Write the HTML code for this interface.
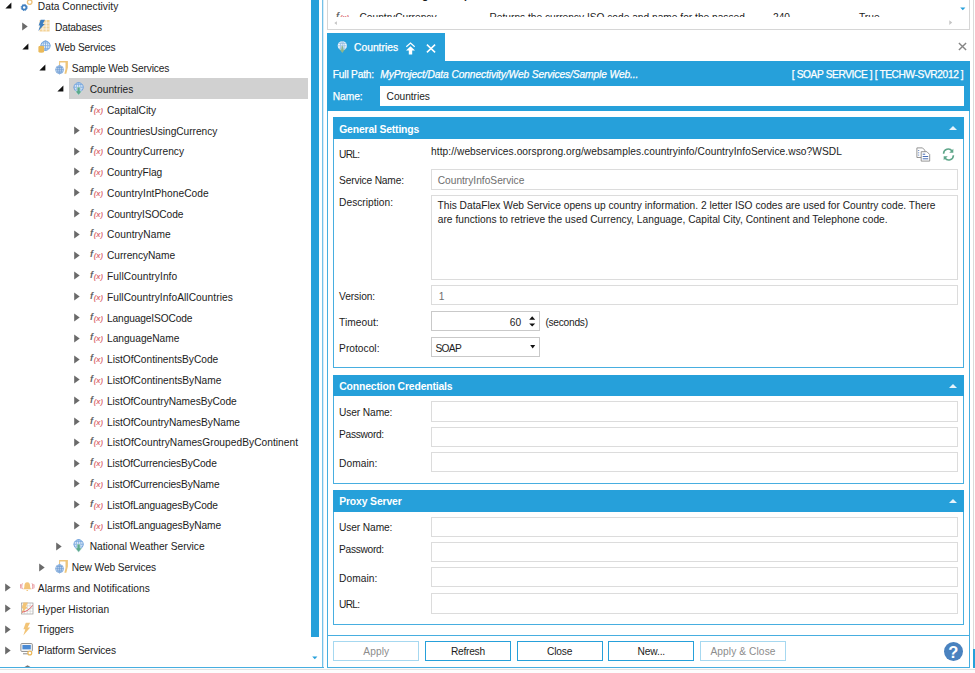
<!DOCTYPE html>
<html><head><meta charset="utf-8"><title>Countries</title>
<style>
*{box-sizing:border-box;margin:0;padding:0}
html,body{width:975px;height:673px;overflow:hidden;background:#fff}
body{position:relative;font-family:"Liberation Sans",sans-serif;font-size:10.2px;color:#1c1c1c}
.abs,.ic,.tr,.sel,.fx,.lbl,.inp,.btn,.hd{position:absolute}
.tr{height:20px;line-height:20px;white-space:nowrap}
.sel{width:239.500px;height:20.600px;background:#D1D1D1}
.fx{width:14px;height:14px;font-family:"Liberation Serif",serif;white-space:nowrap}
.fx i{position:absolute;left:1.500px;top:-1.500px;font-size:10px;color:#666}
.fx b{position:absolute;left:4.800px;top:3px;font-size:6.500px;font-weight:normal;font-style:italic;color:#D9606A;font-family:"Liberation Sans",sans-serif}
.lbl{white-space:nowrap;height:20px;line-height:20px}
.inp{background:#fff;border:1px solid #DCDCDC}
.inp.dk{border-color:#C9C9C9}
.ro{color:#6e6e6e}
.hd{left:333px;width:631px;height:22px;background:#26A0DA}
.hd:after{content:"";position:absolute;right:7.500px;top:8.500px;border-left:4px solid transparent;border-right:4px solid transparent;border-bottom:4.500px solid #E6F3FB}
.sec{position:absolute;left:333px;width:631px;border:1px solid #47AEE0;border-top:none}
.btn{top:641.300px;width:86.300px;height:19.400px;border:1px solid #26A0DA;background:#fff}
.btn.dis{border-color:#A6D8F0;color:#8c8c8c}
</style></head><body>
<!-- TREE -->
<div class="abs" style="left:0;top:0;width:311px;height:667px;overflow:hidden">
<svg class="ic" style="left:4.7px;top:1.6px" width="7" height="7" viewBox="0 0 7 7"><path d="M6.400 .4v6H.4z" fill="#111"/></svg>
<svg class="ic" style="left:20.2px;top:-2.4px" width="14" height="14" viewBox="0 0 14 14"><circle cx="4.2" cy="9.5" r="2.1" fill="none" stroke="#3F7FC0" stroke-width="1.6"/><circle cx="4.2" cy="9.5" r="3.1" fill="none" stroke="#3F7FC0" stroke-width="1" stroke-dasharray="1.2 1.23"/><circle cx="9.7" cy="4.1" r="2.3" fill="none" stroke="#EDC27B" stroke-width="1.3"/></svg>
<div class="lbl" style="left:37.8px;top:-3px;;letter-spacing:0.039px">Data Connectivity</div>
<svg class="ic" style="left:21.8px;top:21.7px" width="6" height="9" viewBox="0 0 6 9"><path d="M.2 .4L5.700 4.500 .2 8.600z" fill="#6a6a6a"/></svg>
<svg class="ic" style="left:37.5px;top:18.4px" width="14" height="14" viewBox="0 0 14 14"><g transform="translate(-.9,0)"><rect x="2.5" y="2" width="10" height="11.5" fill="#F3D296"/><path d="M5.8 2v11.5M9.1 2v11.5M2.5 5h10M2.500 8h10M2.5 11h10" stroke="#fff" stroke-width=".7"/><path d="M3.6 1.8h4.3L5.6 6h2L1.2 13l1.9-5.6H1.5z" fill="#3F7FC0"/></g></svg>
<div class="lbl" style="left:55.1px;top:18px;;letter-spacing:-0.213px">Databases</div>
<svg class="ic" style="left:22.0px;top:43.2px" width="7" height="7" viewBox="0 0 7 7"><path d="M6.400 .4v6H.4z" fill="#111"/></svg>
<svg class="ic" style="left:37.5px;top:39.2px" width="14" height="14" viewBox="0 0 14 14"><g transform="translate(-.3,1.1)"><circle cx="7.8" cy="5.6" r="4.600" fill="#E4EEF9" stroke="#6C9FDB" stroke-width="1"/><path d="M7.8 .6v10M2.800 5.600h10M4 2.900h7.600M4 8.300h7.600" stroke="#7AA9DF" stroke-width=".8"/><ellipse cx="7.8" cy="5.6" rx="2.300" ry="4.800" fill="none" stroke="#7AA9DF" stroke-width=".8"/></g><path d="M.4 7.800a2.850 1 0 0 1 5.700 0v4.900a2.850 1 0 0 1 -5.700 0z" fill="#E9B95A"/></svg>
<div class="lbl" style="left:55.1px;top:38px;;letter-spacing:-0.189px">Web Services</div>
<svg class="ic" style="left:39.3px;top:64.0px" width="7" height="7" viewBox="0 0 7 7"><path d="M6.400 .4v6H.4z" fill="#111"/></svg>
<svg class="ic" style="left:54.8px;top:60.0px" width="14" height="15" viewBox="0 0 14 15"><path d="M4.100 1.100H12.900V7.500L11.300 13.700H9.400L10.500 9V2.600H5.100V5H4.100Z" fill="#EEC57A"/><circle cx="4.600" cy="9.700" r="4.300" fill="#C3D8EF"/><path d="M4.600 5.400v8.600M.3 9.700h8.600M1.200 7.400h6.800M1.200 12h6.800" stroke="#6A9AD3" stroke-width=".7"/><ellipse cx="4.600" cy="9.700" rx="2" ry="4.300" fill="none" stroke="#6A9AD3" stroke-width=".7"/><circle cx="4.600" cy="9.700" r="4" fill="none" stroke="#8FB5E0" stroke-width=".7"/></svg>
<div class="lbl" style="left:71.8px;top:59px;;letter-spacing:-0.133px">Sample Web Services</div>
<div class="sel" style="left:68.5px;top:78px"></div>
<svg class="ic" style="left:56.6px;top:84.8px" width="7" height="7" viewBox="0 0 7 7"><path d="M6.400 .4v6H.4z" fill="#111"/></svg>
<svg class="ic" style="left:72.1px;top:80.8px" width="14" height="15" viewBox="0 0 14 15"><g transform="translate(.6,.7)"><circle cx="6" cy="5.600" r="4.600" fill="#E4EEF9" stroke="#6C9FDB" stroke-width="1"/><path d="M6 .6v10M1 5.600h10M2.200 2.900h7.600M2.200 8.300h7.600" stroke="#7AA9DF" stroke-width=".8"/><ellipse cx="6" cy="5.600" rx="2.300" ry="4.800" fill="none" stroke="#7AA9DF" stroke-width=".8"/><path d="M4.500 5.400h3v4h2L6 13.500 2.500 9.400h2z" fill="#5BA98C" stroke="#E4EEF9" stroke-width=".5"/></g></svg>
<div class="lbl" style="left:89.7px;top:80px;;letter-spacing:0.010px">Countries</div>
<svg class="ic" style="left:89.4px;top:101.6px" width="14" height="14" viewBox="0 0 14 14"><text x="1" y="10" font-family="Liberation Sans, sans-serif" font-style="italic" font-weight="bold" font-size="9.300" fill="#666">f</text><text x="4.800" y="10.500" font-family="Liberation Sans, sans-serif" font-style="italic" font-weight="bold" font-size="7.500" fill="#DC7077">(x)</text></svg>
<div class="lbl" style="left:107.0px;top:101px;;letter-spacing:-0.024px">CapitalCity</div>
<svg class="ic" style="left:73.7px;top:125.7px" width="6" height="9" viewBox="0 0 6 9"><path d="M.2 .4L5.700 4.500 .2 8.600z" fill="#6a6a6a"/></svg>
<svg class="ic" style="left:89.4px;top:122.4px" width="14" height="14" viewBox="0 0 14 14"><text x="1" y="10" font-family="Liberation Sans, sans-serif" font-style="italic" font-weight="bold" font-size="9.300" fill="#666">f</text><text x="4.800" y="10.500" font-family="Liberation Sans, sans-serif" font-style="italic" font-weight="bold" font-size="7.500" fill="#DC7077">(x)</text></svg>
<div class="lbl" style="left:107.0px;top:122px;;letter-spacing:-0.027px">CountriesUsingCurrency</div>
<svg class="ic" style="left:73.7px;top:146.5px" width="6" height="9" viewBox="0 0 6 9"><path d="M.2 .4L5.700 4.500 .2 8.600z" fill="#6a6a6a"/></svg>
<svg class="ic" style="left:89.4px;top:143.2px" width="14" height="14" viewBox="0 0 14 14"><text x="1" y="10" font-family="Liberation Sans, sans-serif" font-style="italic" font-weight="bold" font-size="9.300" fill="#666">f</text><text x="4.800" y="10.500" font-family="Liberation Sans, sans-serif" font-style="italic" font-weight="bold" font-size="7.500" fill="#DC7077">(x)</text></svg>
<div class="lbl" style="left:107.0px;top:142px;;letter-spacing:-0.000px">CountryCurrency</div>
<svg class="ic" style="left:73.7px;top:167.3px" width="6" height="9" viewBox="0 0 6 9"><path d="M.2 .4L5.700 4.500 .2 8.600z" fill="#6a6a6a"/></svg>
<svg class="ic" style="left:89.4px;top:164.0px" width="14" height="14" viewBox="0 0 14 14"><text x="1" y="10" font-family="Liberation Sans, sans-serif" font-style="italic" font-weight="bold" font-size="9.300" fill="#666">f</text><text x="4.800" y="10.500" font-family="Liberation Sans, sans-serif" font-style="italic" font-weight="bold" font-size="7.500" fill="#DC7077">(x)</text></svg>
<div class="lbl" style="left:107.0px;top:163px;;letter-spacing:-0.027px">CountryFlag</div>
<svg class="ic" style="left:73.7px;top:188.1px" width="6" height="9" viewBox="0 0 6 9"><path d="M.2 .4L5.700 4.500 .2 8.600z" fill="#6a6a6a"/></svg>
<svg class="ic" style="left:89.4px;top:184.8px" width="14" height="14" viewBox="0 0 14 14"><text x="1" y="10" font-family="Liberation Sans, sans-serif" font-style="italic" font-weight="bold" font-size="9.300" fill="#666">f</text><text x="4.800" y="10.500" font-family="Liberation Sans, sans-serif" font-style="italic" font-weight="bold" font-size="7.500" fill="#DC7077">(x)</text></svg>
<div class="lbl" style="left:107.0px;top:184px;;letter-spacing:0.047px">CountryIntPhoneCode</div>
<svg class="ic" style="left:73.7px;top:208.9px" width="6" height="9" viewBox="0 0 6 9"><path d="M.2 .4L5.700 4.500 .2 8.600z" fill="#6a6a6a"/></svg>
<svg class="ic" style="left:89.4px;top:205.6px" width="14" height="14" viewBox="0 0 14 14"><text x="1" y="10" font-family="Liberation Sans, sans-serif" font-style="italic" font-weight="bold" font-size="9.300" fill="#666">f</text><text x="4.800" y="10.500" font-family="Liberation Sans, sans-serif" font-style="italic" font-weight="bold" font-size="7.500" fill="#DC7077">(x)</text></svg>
<div class="lbl" style="left:107.0px;top:205px;;letter-spacing:-0.091px">CountryISOCode</div>
<svg class="ic" style="left:73.7px;top:229.7px" width="6" height="9" viewBox="0 0 6 9"><path d="M.2 .4L5.700 4.500 .2 8.600z" fill="#6a6a6a"/></svg>
<svg class="ic" style="left:89.4px;top:226.4px" width="14" height="14" viewBox="0 0 14 14"><text x="1" y="10" font-family="Liberation Sans, sans-serif" font-style="italic" font-weight="bold" font-size="9.300" fill="#666">f</text><text x="4.800" y="10.500" font-family="Liberation Sans, sans-serif" font-style="italic" font-weight="bold" font-size="7.500" fill="#DC7077">(x)</text></svg>
<div class="lbl" style="left:107.0px;top:225px;;letter-spacing:0.086px">CountryName</div>
<svg class="ic" style="left:73.7px;top:250.5px" width="6" height="9" viewBox="0 0 6 9"><path d="M.2 .4L5.700 4.500 .2 8.600z" fill="#6a6a6a"/></svg>
<svg class="ic" style="left:89.4px;top:247.2px" width="14" height="14" viewBox="0 0 14 14"><text x="1" y="10" font-family="Liberation Sans, sans-serif" font-style="italic" font-weight="bold" font-size="9.300" fill="#666">f</text><text x="4.800" y="10.500" font-family="Liberation Sans, sans-serif" font-style="italic" font-weight="bold" font-size="7.500" fill="#DC7077">(x)</text></svg>
<div class="lbl" style="left:107.0px;top:246px;;letter-spacing:-0.035px">CurrencyName</div>
<svg class="ic" style="left:73.7px;top:271.3px" width="6" height="9" viewBox="0 0 6 9"><path d="M.2 .4L5.700 4.500 .2 8.600z" fill="#6a6a6a"/></svg>
<svg class="ic" style="left:89.4px;top:268.0px" width="14" height="14" viewBox="0 0 14 14"><text x="1" y="10" font-family="Liberation Sans, sans-serif" font-style="italic" font-weight="bold" font-size="9.300" fill="#666">f</text><text x="4.800" y="10.500" font-family="Liberation Sans, sans-serif" font-style="italic" font-weight="bold" font-size="7.500" fill="#DC7077">(x)</text></svg>
<div class="lbl" style="left:107.0px;top:267px;;letter-spacing:0.080px">FullCountryInfo</div>
<svg class="ic" style="left:73.7px;top:292.1px" width="6" height="9" viewBox="0 0 6 9"><path d="M.2 .4L5.700 4.500 .2 8.600z" fill="#6a6a6a"/></svg>
<svg class="ic" style="left:89.4px;top:288.8px" width="14" height="14" viewBox="0 0 14 14"><text x="1" y="10" font-family="Liberation Sans, sans-serif" font-style="italic" font-weight="bold" font-size="9.300" fill="#666">f</text><text x="4.800" y="10.500" font-family="Liberation Sans, sans-serif" font-style="italic" font-weight="bold" font-size="7.500" fill="#DC7077">(x)</text></svg>
<div class="lbl" style="left:107.0px;top:288px;;letter-spacing:0.070px">FullCountryInfoAllCountries</div>
<svg class="ic" style="left:73.7px;top:312.9px" width="6" height="9" viewBox="0 0 6 9"><path d="M.2 .4L5.700 4.500 .2 8.600z" fill="#6a6a6a"/></svg>
<svg class="ic" style="left:89.4px;top:309.6px" width="14" height="14" viewBox="0 0 14 14"><text x="1" y="10" font-family="Liberation Sans, sans-serif" font-style="italic" font-weight="bold" font-size="9.300" fill="#666">f</text><text x="4.800" y="10.500" font-family="Liberation Sans, sans-serif" font-style="italic" font-weight="bold" font-size="7.500" fill="#DC7077">(x)</text></svg>
<div class="lbl" style="left:107.0px;top:309px;;letter-spacing:-0.122px">LanguageISOCode</div>
<svg class="ic" style="left:73.7px;top:333.7px" width="6" height="9" viewBox="0 0 6 9"><path d="M.2 .4L5.700 4.500 .2 8.600z" fill="#6a6a6a"/></svg>
<svg class="ic" style="left:89.4px;top:330.4px" width="14" height="14" viewBox="0 0 14 14"><text x="1" y="10" font-family="Liberation Sans, sans-serif" font-style="italic" font-weight="bold" font-size="9.300" fill="#666">f</text><text x="4.800" y="10.500" font-family="Liberation Sans, sans-serif" font-style="italic" font-weight="bold" font-size="7.500" fill="#DC7077">(x)</text></svg>
<div class="lbl" style="left:107.0px;top:329px;;letter-spacing:-0.010px">LanguageName</div>
<svg class="ic" style="left:73.7px;top:354.5px" width="6" height="9" viewBox="0 0 6 9"><path d="M.2 .4L5.700 4.500 .2 8.600z" fill="#6a6a6a"/></svg>
<svg class="ic" style="left:89.4px;top:351.2px" width="14" height="14" viewBox="0 0 14 14"><text x="1" y="10" font-family="Liberation Sans, sans-serif" font-style="italic" font-weight="bold" font-size="9.300" fill="#666">f</text><text x="4.800" y="10.500" font-family="Liberation Sans, sans-serif" font-style="italic" font-weight="bold" font-size="7.500" fill="#DC7077">(x)</text></svg>
<div class="lbl" style="left:107.0px;top:350px;;letter-spacing:-0.016px">ListOfContinentsByCode</div>
<svg class="ic" style="left:73.7px;top:375.3px" width="6" height="9" viewBox="0 0 6 9"><path d="M.2 .4L5.700 4.500 .2 8.600z" fill="#6a6a6a"/></svg>
<svg class="ic" style="left:89.4px;top:372.0px" width="14" height="14" viewBox="0 0 14 14"><text x="1" y="10" font-family="Liberation Sans, sans-serif" font-style="italic" font-weight="bold" font-size="9.300" fill="#666">f</text><text x="4.800" y="10.500" font-family="Liberation Sans, sans-serif" font-style="italic" font-weight="bold" font-size="7.500" fill="#DC7077">(x)</text></svg>
<div class="lbl" style="left:107.0px;top:371px;;letter-spacing:0.000px">ListOfContinentsByName</div>
<svg class="ic" style="left:73.7px;top:396.1px" width="6" height="9" viewBox="0 0 6 9"><path d="M.2 .4L5.700 4.500 .2 8.600z" fill="#6a6a6a"/></svg>
<svg class="ic" style="left:89.4px;top:392.8px" width="14" height="14" viewBox="0 0 14 14"><text x="1" y="10" font-family="Liberation Sans, sans-serif" font-style="italic" font-weight="bold" font-size="9.300" fill="#666">f</text><text x="4.800" y="10.500" font-family="Liberation Sans, sans-serif" font-style="italic" font-weight="bold" font-size="7.500" fill="#DC7077">(x)</text></svg>
<div class="lbl" style="left:107.0px;top:392px;;letter-spacing:-0.046px">ListOfCountryNamesByCode</div>
<svg class="ic" style="left:73.7px;top:416.9px" width="6" height="9" viewBox="0 0 6 9"><path d="M.2 .4L5.700 4.500 .2 8.600z" fill="#6a6a6a"/></svg>
<svg class="ic" style="left:89.4px;top:413.6px" width="14" height="14" viewBox="0 0 14 14"><text x="1" y="10" font-family="Liberation Sans, sans-serif" font-style="italic" font-weight="bold" font-size="9.300" fill="#666">f</text><text x="4.800" y="10.500" font-family="Liberation Sans, sans-serif" font-style="italic" font-weight="bold" font-size="7.500" fill="#DC7077">(x)</text></svg>
<div class="lbl" style="left:107.0px;top:413px;;letter-spacing:-0.026px">ListOfCountryNamesByName</div>
<svg class="ic" style="left:73.7px;top:437.7px" width="6" height="9" viewBox="0 0 6 9"><path d="M.2 .4L5.700 4.500 .2 8.600z" fill="#6a6a6a"/></svg>
<svg class="ic" style="left:89.4px;top:434.4px" width="14" height="14" viewBox="0 0 14 14"><text x="1" y="10" font-family="Liberation Sans, sans-serif" font-style="italic" font-weight="bold" font-size="9.300" fill="#666">f</text><text x="4.800" y="10.500" font-family="Liberation Sans, sans-serif" font-style="italic" font-weight="bold" font-size="7.500" fill="#DC7077">(x)</text></svg>
<div class="lbl" style="left:107.0px;top:433px;;letter-spacing:0.039px">ListOfCountryNamesGroupedByContinent</div>
<svg class="ic" style="left:73.7px;top:458.5px" width="6" height="9" viewBox="0 0 6 9"><path d="M.2 .4L5.700 4.500 .2 8.600z" fill="#6a6a6a"/></svg>
<svg class="ic" style="left:89.4px;top:455.2px" width="14" height="14" viewBox="0 0 14 14"><text x="1" y="10" font-family="Liberation Sans, sans-serif" font-style="italic" font-weight="bold" font-size="9.300" fill="#666">f</text><text x="4.800" y="10.500" font-family="Liberation Sans, sans-serif" font-style="italic" font-weight="bold" font-size="7.500" fill="#DC7077">(x)</text></svg>
<div class="lbl" style="left:107.0px;top:454px;;letter-spacing:-0.110px">ListOfCurrenciesByCode</div>
<svg class="ic" style="left:73.7px;top:479.3px" width="6" height="9" viewBox="0 0 6 9"><path d="M.2 .4L5.700 4.500 .2 8.600z" fill="#6a6a6a"/></svg>
<svg class="ic" style="left:89.4px;top:476.0px" width="14" height="14" viewBox="0 0 14 14"><text x="1" y="10" font-family="Liberation Sans, sans-serif" font-style="italic" font-weight="bold" font-size="9.300" fill="#666">f</text><text x="4.800" y="10.500" font-family="Liberation Sans, sans-serif" font-style="italic" font-weight="bold" font-size="7.500" fill="#DC7077">(x)</text></svg>
<div class="lbl" style="left:107.0px;top:475px;;letter-spacing:-0.111px">ListOfCurrenciesByName</div>
<svg class="ic" style="left:73.7px;top:500.1px" width="6" height="9" viewBox="0 0 6 9"><path d="M.2 .4L5.700 4.500 .2 8.600z" fill="#6a6a6a"/></svg>
<svg class="ic" style="left:89.4px;top:496.8px" width="14" height="14" viewBox="0 0 14 14"><text x="1" y="10" font-family="Liberation Sans, sans-serif" font-style="italic" font-weight="bold" font-size="9.300" fill="#666">f</text><text x="4.800" y="10.500" font-family="Liberation Sans, sans-serif" font-style="italic" font-weight="bold" font-size="7.500" fill="#DC7077">(x)</text></svg>
<div class="lbl" style="left:107.0px;top:496px;;letter-spacing:-0.118px">ListOfLanguagesByCode</div>
<svg class="ic" style="left:73.7px;top:520.9px" width="6" height="9" viewBox="0 0 6 9"><path d="M.2 .4L5.700 4.500 .2 8.600z" fill="#6a6a6a"/></svg>
<svg class="ic" style="left:89.4px;top:517.6px" width="14" height="14" viewBox="0 0 14 14"><text x="1" y="10" font-family="Liberation Sans, sans-serif" font-style="italic" font-weight="bold" font-size="9.300" fill="#666">f</text><text x="4.800" y="10.500" font-family="Liberation Sans, sans-serif" font-style="italic" font-weight="bold" font-size="7.500" fill="#DC7077">(x)</text></svg>
<div class="lbl" style="left:107.0px;top:516px;;letter-spacing:-0.100px">ListOfLanguagesByName</div>
<svg class="ic" style="left:56.4px;top:541.7px" width="6" height="9" viewBox="0 0 6 9"><path d="M.2 .4L5.700 4.500 .2 8.600z" fill="#6a6a6a"/></svg>
<svg class="ic" style="left:72.1px;top:538.4px" width="14" height="15" viewBox="0 0 14 15"><g transform="translate(.6,.7)"><circle cx="6" cy="5.600" r="4.600" fill="#E4EEF9" stroke="#6C9FDB" stroke-width="1"/><path d="M6 .6v10M1 5.600h10M2.200 2.900h7.600M2.200 8.300h7.600" stroke="#7AA9DF" stroke-width=".8"/><ellipse cx="6" cy="5.600" rx="2.300" ry="4.800" fill="none" stroke="#7AA9DF" stroke-width=".8"/><path d="M4.500 5.400h3v4h2L6 13.500 2.500 9.400h2z" fill="#5BA98C" stroke="#E4EEF9" stroke-width=".5"/></g></svg>
<div class="lbl" style="left:89.7px;top:537px;;letter-spacing:-0.018px">National Weather Service</div>
<svg class="ic" style="left:39.1px;top:562.5px" width="6" height="9" viewBox="0 0 6 9"><path d="M.2 .4L5.700 4.500 .2 8.600z" fill="#6a6a6a"/></svg>
<svg class="ic" style="left:54.8px;top:559.2px" width="14" height="15" viewBox="0 0 14 15"><path d="M4.100 1.100H12.900V7.500L11.300 13.700H9.400L10.500 9V2.600H5.100V5H4.100Z" fill="#EEC57A"/><circle cx="4.600" cy="9.700" r="4.300" fill="#C3D8EF"/><path d="M4.600 5.400v8.600M.3 9.700h8.600M1.200 7.400h6.800M1.200 12h6.800" stroke="#6A9AD3" stroke-width=".7"/><ellipse cx="4.600" cy="9.700" rx="2" ry="4.300" fill="none" stroke="#6A9AD3" stroke-width=".7"/><circle cx="4.600" cy="9.700" r="4" fill="none" stroke="#8FB5E0" stroke-width=".7"/></svg>
<div class="lbl" style="left:71.8px;top:558px;;letter-spacing:-0.098px">New Web Services</div>
<svg class="ic" style="left:4.5px;top:583.3px" width="6" height="9" viewBox="0 0 6 9"><path d="M.2 .4L5.700 4.500 .2 8.600z" fill="#6a6a6a"/></svg>
<svg class="ic" style="left:20.2px;top:580.0px" width="14.500" height="14" viewBox="0 0 15.400 14" preserveAspectRatio="none"><path d="M7.700 2.200c-2.400 0-3 2-3 3.800 0 1.700-.7 2.600-1.500 3.300h9c-.8-.7-1.500-1.600-1.500-3.300 0-1.800-.6-3.800-3-3.800zM6.700 10.100h2a1 1 0 0 1 -2 0z" fill="#F2C477"/><path d="M2.600 3.400c-1 1.500-1 4.200 0 5.700M.9 4.100c-.6 1.100-.6 3.300 0 4.400M12.800 3.400c1 1.500 1 4.200 0 5.700M14.500 4.100c.6 1.100.6 3.300 0 4.400" fill="none" stroke="#E0777D" stroke-width=".8"/></svg>
<div class="lbl" style="left:37.8px;top:579px;;letter-spacing:0.098px">Alarms and Notifications</div>
<svg class="ic" style="left:4.5px;top:604.1px" width="6" height="9" viewBox="0 0 6 9"><path d="M.2 .4L5.700 4.500 .2 8.600z" fill="#6a6a6a"/></svg>
<svg class="ic" style="left:20.2px;top:600.8px" width="14" height="14" viewBox="0 0 14 14"><rect x="1.500" y="2" width="11.500" height="11" fill="#fff" stroke="#9a9a9a" stroke-width=".7"/><path d="M4.400 2v11M7.300 2v11M10.200 2v11M1.500 4.800h11.500M1.500 7.500h11.500M1.500 10.200h11.500" stroke="#c4c4c4" stroke-width=".5"/><path d="M3.400 1.400h4.600L5.700 5.800h2.100L1.400 12.800l1.800-5.600H1.600z" fill="#F2C477"/><path d="M2 11.200c4.500-.5 8-3 10.600-6.800" fill="none" stroke="#E0575D" stroke-width=".9"/></svg>
<div class="lbl" style="left:37.8px;top:600px;;letter-spacing:0.092px">Hyper Historian</div>
<svg class="ic" style="left:4.5px;top:624.9px" width="6" height="9" viewBox="0 0 6 9"><path d="M.2 .4L5.700 4.500 .2 8.600z" fill="#6a6a6a"/></svg>
<svg class="ic" style="left:20.2px;top:621.6px" width="14" height="14" viewBox="0 0 14 14"><path d="M5.800 .8h4.300L7.600 5.600h2.600L3.300 13.400l2-6.200H3.400z" fill="#F2C477"/></svg>
<div class="lbl" style="left:37.8px;top:620px;;letter-spacing:-0.136px">Triggers</div>
<svg class="ic" style="left:4.5px;top:645.7px" width="6" height="9" viewBox="0 0 6 9"><path d="M.2 .4L5.700 4.500 .2 8.600z" fill="#6a6a6a"/></svg>
<svg class="ic" style="left:20.2px;top:642.4px" width="14" height="14" viewBox="0 0 14 14"><rect x=".9" y="1.600" width="11.400" height="7.800" rx=".8" fill="#fff" stroke="#8a8a8a" stroke-width="1"/><rect x="2.400" y="3" width="8.400" height="4.400" fill="#4A8AD4"/><path d="M3 11.800h5" stroke="#8a8a8a" stroke-width="1"/><circle cx="9.800" cy="11" r="1.900" fill="#fff" stroke="#EDB95A" stroke-width="1.300"/></svg>
<div class="lbl" style="left:37.8px;top:641px;;letter-spacing:-0.102px">Platform Services</div>
<svg class="ic" style="left:21.500px;top:664.500px" width="12" height="4" viewBox="0 0 12 4"><path d="M0 3.500L5.500 .3 11 3.500z" fill="#777"/></svg>
</div>
<!-- tree scrollbar -->
<div class="abs" style="left:311.200px;top:0;width:7.600px;height:637px;background:#26A0DA"></div>
<svg class="ic" style="left:312px;top:656px" width="6" height="4" viewBox="0 0 6 4"><path d="M.2 .4h5.200L2.800 3.200z" fill="#26A0DA"/></svg>
<div class="abs" style="left:322px;top:0;width:2px;height:668px;background:linear-gradient(to right,#74C1E8 50%,#D6ECF8 50%)"></div>
<div class="abs" style="left:0;top:666.800px;width:323.500px;height:1.200px;background:#47AEE0"></div>
<!-- bottom strip -->
<div class="abs" style="left:0;top:668px;width:975px;height:5px;background:#FDFDFD"></div><div class="abs" style="left:0;top:669px;width:975px;height:1px;background:#E4E4E4"></div>

<!-- TOP GRID -->
<div class="abs" style="left:327px;top:-2px;width:643px;height:31.500px;border:1px solid #D6D6D6;background:#fff;overflow:hidden">
  <div class="abs" style="left:0;top:-10.400px;width:640px;height:13px;font-weight:bold;font-size:10.400px;line-height:13px;overflow:hidden"><span class="abs" style="left:94px">g</span><span class="abs" style="left:136px">p</span></div>
  <div class="abs" style="left:0;top:10px;width:640px;height:8.200px;overflow:hidden;line-height:20px">
    <svg class="ic" style="left:6.7px;top:0.3px" width="14" height="14" viewBox="0 0 14 14"><text x="1" y="10" font-family="Liberation Sans, sans-serif" font-style="italic" font-weight="bold" font-size="9.300" fill="#666">f</text><text x="4.800" y="10.500" font-family="Liberation Sans, sans-serif" font-style="italic" font-weight="bold" font-size="7.500" fill="#DC7077">(x)</text></svg>
    <span class="abs" style="left:31.500px;top:-1px;white-space:nowrap">CountryCurrency</span>
    <span class="abs" style="left:161.500px;top:-1px;white-space:nowrap">Returns the currency ISO code and name for the passed</span>
    <span class="abs" style="left:445px;top:-1px">240</span>
    <span class="abs" style="left:531px;top:-1px">True</span>
  </div>
  <svg class="ic" style="left:6.200px;top:21.800px" width="4" height="5" viewBox="0 0 4 5"><path d="M2.900 .2v3.800L.3 2.100z" fill="#C4C4C4"/></svg>
  <svg class="ic" style="left:620.800px;top:21.200px" width="4" height="6" viewBox="0 0 4 6"><path d="M.3 .3v4.600L3.200 2.600z" fill="#C4C4C4"/></svg>
  <svg class="ic" style="left:632px;top:8.400px" width="6" height="4" viewBox="0 0 6 4"><path d="M.2 .4h5.200L2.800 3.200z" fill="#26A0DA"/></svg>
</div>
<div class="abs" style="left:972.600px;top:0;width:1px;height:649px;background:#DADADA"></div>
<div class="abs" style="left:972.600px;top:649px;width:3px;height:19px;background:#26A0DA"></div>

<!-- TAB -->
<div class="abs" style="left:327px;top:33px;width:117.500px;height:28.500px;background:#26A0DA"></div>
<svg class="ic" style="left:336.500px;top:40.500px" width="11" height="13" viewBox="0 0 11 13"><circle cx="5.300" cy="4.800" r="4.600" fill="#EEF5FC"/><path d="M5.300 .4v8.800M.9 4.800h8.800M1.800 2.400h7M1.800 7.200h7" stroke="#8DB7E0" stroke-width=".7"/><ellipse cx="5.300" cy="4.800" rx="2" ry="4.400" fill="none" stroke="#8DB7E0" stroke-width=".7"/><path d="M4.500 5.200h1.600v3.400h1.800L5.300 12 2.700 8.600h1.800z" fill="#8FB58A"/></svg>
<div class="abs" style="left:354px;top:38px;line-height:20px;color:#fff;-webkit-text-stroke:.25px #fff;font-size:10.300px;white-space:nowrap">Countries</div>
<svg class="ic" style="left:405.300px;top:41.500px" width="11" height="13" viewBox="0 0 11 13"><path d="M1.300 4.700L5.500 1l4.200 3.700" fill="none" stroke="#fff" stroke-width="1.200"/><path d="M5.500 4.200L10 8.600H7.200v4H3.800v-4H1z" fill="#fff"/></svg>
<svg class="ic" style="left:425.800px;top:43.900px" width="10" height="9" viewBox="0 0 10 9"><path d="M.9 .6l8.200 7.800M9.100 .6L.9 8.400" stroke="#fff" stroke-width="1.500"/></svg>
<svg class="ic" style="left:958px;top:42.400px" width="9" height="9" viewBox="0 0 9 9"><path d="M.9 .9l7.200 7.200M8.100 .9L.9 8.100" stroke="#858585" stroke-width="1.400"/></svg>


<!-- BLUE HEADER -->
<div class="abs" style="left:327px;top:60.700px;width:643px;height:50.700px;background:#26A0DA"></div>
<div class="lbl" style="left:332.8px;top:65px;color:#fff;-webkit-text-stroke:.25px #fff;letter-spacing:-0.185px">Full Path:</div>
<div class="lbl" style="left:380.3px;top:65px;color:#fff;-webkit-text-stroke:.25px #fff;font-style:italic;letter-spacing:-0.091px">MyProject/Data Connectivity/Web Services/Sample Web...</div>
<div class="lbl" style="left:791.8px;top:65px;color:#fff;-webkit-text-stroke:.25px #fff;letter-spacing:-0.396px">[ SOAP SERVICE ] [ TECHW-SVR2012 ]</div>
<div class="lbl" style="left:332.8px;top:87px;color:#fff;-webkit-text-stroke:.25px #fff;letter-spacing:-0.043px">Name:</div>
<div class="abs" style="left:379.600px;top:86.100px;width:584.400px;height:20px;background:#fff"></div>
<div class="lbl" style="left:386.6px;top:87px;;letter-spacing:-0.034px">Countries</div>

<!-- PANEL BORDERS -->
<div class="abs" style="left:327px;top:111px;width:1px;height:557px;background:#47AEE0"></div>
<div class="abs" style="left:969.200px;top:111px;width:1px;height:557px;background:#47AEE0"></div>
<div class="abs" style="left:327px;top:666.800px;width:643.200px;height:1.200px;background:#47AEE0"></div>
<div class="abs" style="left:327px;top:634.800px;width:643px;height:1.100px;background:#47AEE0"></div>

<!-- GENERAL SETTINGS -->
<div class="hd" style="top:117.2px;height:21.7px"></div><div class="lbl" style="left:339.2px;top:120px;color:#fff;font-weight:bold;font-size:10.4px;letter-spacing:-0.167px">General Settings</div>
<div class="sec" style="top:138.900px;height:229.600px"></div>
<div class="lbl" style="left:339.1px;top:145px;;letter-spacing:-0.755px">URL:</div>
<div class="lbl" style="left:431.0px;top:142px;;letter-spacing:0.067px">http://webservices.oorsprong.org/websamples.countryinfo/CountryInfoService.wso?WSDL</div>
<div class="lbl" style="left:339.1px;top:171px;;letter-spacing:-0.155px">Service Name:</div>
<div class="inp " style="left:431px;top:169.4px;width:526.5px;height:20.2px;"></div>
<div class="lbl" style="left:437.7px;top:171px;color:#6e6e6e">CountryInfoService</div>
<div class="lbl" style="left:339.1px;top:193px;;letter-spacing:0.017px">Description:</div>
<div class="inp " style="left:431px;top:195px;width:526.5px;height:84.5px;"></div>
<div class="lbl" style="left:437.5px;top:196px;;letter-spacing:0.006px">This DataFlex Web Service opens up country information. 2 letter ISO codes are used for Country code. There</div>
<div class="lbl" style="left:437.7px;top:210px;;letter-spacing:0.038px">are functions to retrieve the used Currency, Language, Capital City, Continent and Telephone code.</div>
<div class="lbl" style="left:339.1px;top:287px;;letter-spacing:-0.102px">Version:</div>
<div class="inp " style="left:431px;top:285.2px;width:526.5px;height:20.2px;"></div>
<div class="lbl" style="left:438.8px;top:287px;color:#6e6e6e">1</div>
<div class="lbl" style="left:339.1px;top:313px;;letter-spacing:0.042px">Timeout:</div>
<div class="inp dk" style="left:431px;top:311.3px;width:108.5px;height:20.2px;"></div>
<div class="lbl" style="left:509.7px;top:313px;;letter-spacing:0.128px">60</div>
<svg class="ic" style="left:529.200px;top:316.200px" width="7" height="11" viewBox="0 0 7 11"><path d="M.2 3.800L3.200 .2 6.200 3.800zM.2 7.600L3.200 10.600 6.200 7.600z" fill="#111"/></svg>
<div class="lbl" style="left:545.4px;top:313px;;letter-spacing:-0.259px">(seconds)</div>
<div class="lbl" style="left:339.1px;top:339px;;letter-spacing:0.022px">Protocol:</div>
<div class="inp dk" style="left:431px;top:337.3px;width:108.5px;height:20.2px;"></div>
<div class="lbl" style="left:435.5px;top:339px;;letter-spacing:-0.703px">SOAP</div>
<svg class="ic" style="left:530px;top:345px" width="6" height="4" viewBox="0 0 6 4"><path d="M.2 0h5L2.700 3.400z" fill="#111"/></svg>
<!-- copy / refresh icons -->
<svg class="ic" style="left:915.500px;top:146.500px" width="15" height="15" viewBox="0 0 15 15"><path d="M.9 .9h5.600l2.300 2.300v7.300H.9z" fill="#fff" stroke="#8a8a8a" stroke-width=".9"/><path d="M2.200 3.500h1M2.200 5.800h1M2.200 8.100h1" stroke="#4A6FB5" stroke-width=".9"/><path d="M5.200 4.700h5.700l2.800 2.800v6.600H5.200z" fill="#fff" stroke="#8a8a8a" stroke-width=".9"/><path d="M6.700 7.200h2.500M6.700 9.500h5.500M6.700 11.800h5.500" stroke="#4A6FB5" stroke-width="1"/></svg>
<svg class="ic" style="left:941.700px;top:147.700px" width="13" height="13" viewBox="0 0 14 14"><path d="M1.700 6.200A5 5 0 0 1 10.800 3.300" fill="none" stroke="#5FA68A" stroke-width="1.700"/><path d="M12.200 .8v4.400H7.800z" fill="#5FA68A"/><path d="M12.300 7.800A5 5 0 0 1 3.200 10.700" fill="none" stroke="#5FA68A" stroke-width="1.700"/><path d="M1.800 13.200V8.800h4.400z" fill="#5FA68A"/></svg>

<!-- CONNECTION CREDENTIALS -->
<div class="hd" style="top:375px;height:21.4px"></div><div class="lbl" style="left:339.2px;top:377px;color:#fff;font-weight:bold;font-size:10.4px;letter-spacing:-0.151px">Connection Credentials</div>
<div class="sec" style="top:396.400px;height:87.600px"></div>
<div class="lbl" style="left:339.1px;top:403px;;letter-spacing:-0.116px">User Name:</div>
<div class="inp " style="left:431px;top:401.4px;width:526.5px;height:20.2px;"></div>
<div class="lbl" style="left:339.1px;top:425px;;letter-spacing:-0.307px">Password:</div>
<div class="inp " style="left:431px;top:427.1px;width:526.5px;height:19.8px;"></div>
<div class="lbl" style="left:339.1px;top:454px;;letter-spacing:0.066px">Domain:</div>
<div class="inp " style="left:431px;top:452.3px;width:526.5px;height:20.2px;"></div>

<!-- PROXY SERVER -->
<div class="hd" style="top:490.2px;height:21.4px"></div><div class="lbl" style="left:339.2px;top:492px;color:#fff;font-weight:bold;font-size:10.4px;letter-spacing:-0.144px">Proxy Server</div>
<div class="sec" style="top:511.600px;height:113.600px"></div>
<div class="lbl" style="left:339.1px;top:518px;;letter-spacing:-0.116px">User Name:</div>
<div class="inp " style="left:431px;top:516.5px;width:526.5px;height:20.2px;"></div>
<div class="lbl" style="left:339.1px;top:540px;;letter-spacing:-0.307px">Password:</div>
<div class="inp " style="left:431px;top:542.1px;width:526.5px;height:19.8px;"></div>
<div class="lbl" style="left:339.1px;top:569px;;letter-spacing:0.066px">Domain:</div>
<div class="inp " style="left:431px;top:567.3px;width:526.5px;height:20.2px;"></div>
<div class="lbl" style="left:339.1px;top:595px;;letter-spacing:-0.755px">URL:</div>
<div class="inp " style="left:431px;top:593.4px;width:526.5px;height:20.2px;"></div>

<!-- BUTTONS -->
<div class="btn dis" style="left:333.1px"></div>
<div class="lbl" style="left:363.3px;top:642px;color:#8c8c8c;letter-spacing:0.083px">Apply</div>
<div class="btn" style="left:424.8px"></div>
<div class="lbl" style="left:450.9px;top:642px;;letter-spacing:-0.239px">Refresh</div>
<div class="btn" style="left:516.5px"></div>
<div class="lbl" style="left:547.0px;top:642px;;letter-spacing:-0.169px">Close</div>
<div class="btn" style="left:608.2px"></div>
<div class="lbl" style="left:637.6px;top:642px;;letter-spacing:-0.152px">New...</div>
<div class="btn dis" style="left:699.9px"></div>
<div class="lbl" style="left:710.4px;top:642px;color:#8c8c8c;letter-spacing:0.092px">Apply &amp; Close</div>
<div class="abs" style="left:943.900px;top:641.700px;width:19px;height:19px;border-radius:50%;background:#4A82BF;color:#fff;font-weight:bold;font-size:16.500px;line-height:20px;text-align:center">?</div>

</body></html>
